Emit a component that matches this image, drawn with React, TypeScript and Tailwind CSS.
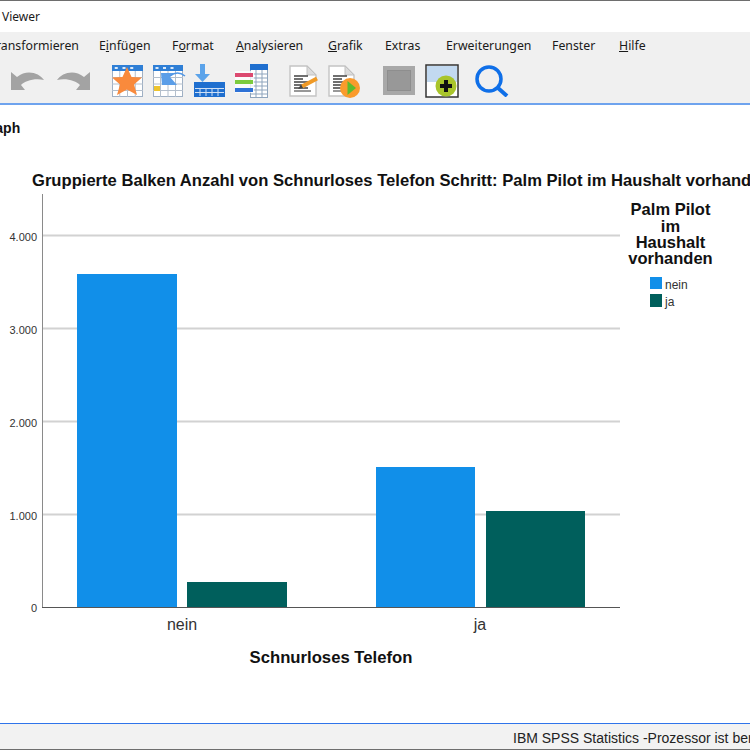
import React from 'react';

const menuItems = [
  { before: '', key: '', after: 'ransformieren', width: 'w-[82px] ml-[-4px]' },
  { before: 'E', key: 'i', after: 'nfügen', width: 'w-[52px]' },
  { before: 'F', key: 'o', after: 'rmat', width: 'w-[43px]' },
  { before: '', key: 'A', after: 'nalysieren', width: 'w-[71px]' },
  { before: '', key: 'G', after: 'rafik', width: 'w-[36px]' },
  { before: 'Extras', key: '', after: '', width: 'w-[40px]' },
  { before: 'Erweiterungen', key: '', after: '', width: 'w-[85px]' },
  { before: 'Fenster', key: '', after: '', width: 'w-[46px]' },
  { before: '', key: 'H', after: 'ilfe', width: 'w-[27px]' },
];

function TableGrid({ w, h }: { w: number; h: number }) {
  const cols = [1, 2, 3].map((i) => (w * i) / 4);
  const rows = [1, 2, 3].map((i) => 6 + ((h - 6) * i) / 4);
  return (
    <g>
      <rect x={0.5} y={0.5} width={w - 1} height={h - 1} fill="#fff" stroke="#9fb0c4" />
      <rect x={0} y={0} width={w} height={6} fill="#2f7fd6" />
      {cols.map((c) => (
        <line key={c} x1={c} x2={c} y1={6} y2={h} stroke="#b4bfcc" />
      ))}
      {rows.map((r) => (
        <line key={r} x1={0} x2={w} y1={r} y2={r} stroke="#b4bfcc" />
      ))}
      {cols.map((c) => (
        <rect key={c} x={c - 5} y={2} width={3} height={2} fill="#dbe9f8" />
      ))}
    </g>
  );
}

function UndoIcon() {
  return (
    <svg width="33" height="20" viewBox="0 0 33 20" className="block">
      <path d="M0 1 L0 19 L14 19 L10 14 C14 10 23 7 33 9 C28 2 16 -2 6 6 Z" fill="#a3a3a3" />
    </svg>
  );
}

function RedoIcon() {
  return (
    <svg width="33" height="20" viewBox="0 0 33 20" className="block">
      <path d="M33 1 L33 19 L19 19 L23 14 C19 10 10 7 0 9 C5 2 17 -2 27 6 Z" fill="#a3a3a3" />
    </svg>
  );
}

function StarTableIcon() {
  return (
    <svg width="31" height="32" viewBox="0 0 31 32" className="block">
      <TableGrid w={31} h={32} />
      <path d="M15 2 L19.5 12 L30 12.5 L22 19.5 L25 30 L15 24.5 L5 30 L8 19.5 L0 12.5 L10.5 12 Z" fill="#f98a3c" />
    </svg>
  );
}

function ArrowTableIcon() {
  return (
    <svg width="33" height="32" viewBox="0 0 33 32" className="block">
      <TableGrid w={30} h={32} />
      <rect x={1} y={21} width={6} height={5} fill="#edc42f" />
      <path d="M8 8 L21 8 L17 12 L24 20 L9 20 Z" fill="#5b9ee8" />
      <path d="M17 11 C22 7 27 7 32 11" fill="none" stroke="#4f96e6" strokeWidth="1.5" />
    </svg>
  );
}

function ImportIcon() {
  return (
    <svg width="32" height="33" viewBox="0 0 32 33" className="block">
      <rect x={0} y={18} width={31} height={15} fill="#1f6fcf" />
      {[6, 12, 18, 24].map((x) => (
        <line key={x} x1={x} x2={x} y1={24} y2={32} stroke="#cfe0f5" />
      ))}
      <rect x={1} y={24} width={29} height={1} fill="#cfe0f5" />
      <rect x={1} y={28} width={29} height={1} fill="#cfe0f5" />
      <path d="M6 0 L11 0 L11 10 L16 10 L8.5 18 L1 10 L6 10 Z" fill="#5ba3ea" />
    </svg>
  );
}

function VariableIcon() {
  return (
    <svg width="33" height="34" viewBox="0 0 33 34" className="block">
      <rect x={15.5} y={0.5} width={17} height={33} fill="#fff" stroke="#8fa5bd" />
      <rect x={15} y={0} width={18} height={6} fill="#1f6fcf" />
      {[21, 27].map((x) => (
        <line key={x} x1={x} x2={x} y1={6} y2={33} stroke="#8fa5bd" />
      ))}
      {[10, 14, 18, 22, 26, 30].map((y) => (
        <line key={y} x1={16} x2={33} y1={y} y2={y} stroke="#8fa5bd" />
      ))}
      <rect x={0} y={7} width={19} height={22} fill="#fff" opacity="0.75" />
      <rect x={0} y={9} width={18} height={4} fill="#dc4a70" />
      <rect x={0} y={16} width={18} height={4} fill="#7ccb3e" />
      <rect x={0} y={24} width={18} height={4} fill="#2f72d6" />
    </svg>
  );
}

function DocLines() {
  return (
    <g>
      {[11, 14, 17, 20, 23].map((y, i) => (
        <line key={y} x1={5} x2={i % 2 ? 14 : 19} y1={y} y2={y} stroke="#333" strokeWidth="1.4" />
      ))}
      <line x1={5} x2={22} y1={26} y2={26} stroke="#333" strokeWidth="1" />
    </g>
  );
}

function DocPenIcon() {
  return (
    <svg width="30" height="32" viewBox="0 0 30 32" className="block">
      <path d="M1 1 L18 1 L27 10 L27 31 L1 31 Z" fill="#fff" stroke="#c4c4c4" strokeWidth="1.4" />
      <path d="M18 1 L18 10 L27 10 Z" fill="#dcdcdc" stroke="#c0c0c0" />
      <DocLines />
      <path d="M13 21.5 L28 13.5" stroke="#f09a26" strokeWidth="4" />
      <path d="M9 24 L12 19.5 L14 23 Z" fill="#444" />
    </svg>
  );
}

function DocPlayIcon() {
  return (
    <svg width="33" height="33" viewBox="0 0 33 33" className="block">
      <path d="M1 1 L17 1 L26 10 L26 31 L1 31 Z" fill="#fff" stroke="#c4c4c4" strokeWidth="1.4" />
      <path d="M17 1 L17 10 L26 10 Z" fill="#dcdcdc" stroke="#c0c0c0" />
      <DocLines />
      <circle cx="22" cy="23" r="10" fill="#fa9b2c" />
      <path d="M19.5 16 L28 23 L19.5 30 Z" fill="#5dbb2e" />
    </svg>
  );
}

function GrayBoxIcon() {
  return (
    <svg width="32" height="29" viewBox="0 0 32 29" className="block">
      <rect x={0} y={0} width={32} height={29} fill="#a8a8a8" />
      <rect x={4.5} y={4.5} width={23} height={20} fill="#989898" stroke="#8e8e8e" />
    </svg>
  );
}

function BoxPlusIcon() {
  return (
    <svg width="34" height="34" viewBox="0 0 34 34" className="block">
      <rect x={1} y={1} width={32} height={32} fill="#fff" stroke="#333" strokeWidth="1.5" />
      <rect x={2} y={2} width={30} height={16} fill="#c2d9f0" />
      <circle cx="21" cy="22" r="10.5" fill="#a9c52b" />
      <path d="M19 16 h4 v4 h4 v4 h-4 v4 h-4 v-4 h-4 v-4 h4 Z" fill="#111" />
    </svg>
  );
}

function SearchIcon() {
  return (
    <svg width="34" height="32" viewBox="0 0 34 32" className="block">
      <circle cx="14" cy="14" r="12" fill="none" stroke="#0f6fe8" strokeWidth="3.5" />
      <line x1="23" y1="23" x2="32" y2="31" stroke="#0f6fe8" strokeWidth="4" />
    </svg>
  );
}

function Chart() {
  const grid = [
    { y: 235.5, label: '4.000' },
    { y: 328.5, label: '3.000' },
    { y: 421.5, label: '2.000' },
    { y: 514.5, label: '1.000' },
  ];
  const bars = [
    { x: 77, w: 100, top: 274, fill: '#118fe9' },
    { x: 187, w: 100, top: 582, fill: '#005f5c' },
    { x: 376, w: 99, top: 467, fill: '#118fe9' },
    { x: 486, w: 99, top: 511, fill: '#005f5c' },
  ];
  const legendTitle = ['Palm Pilot', 'im', 'Haushalt', 'vorhanden'];
  return (
    <svg width="750" height="560" viewBox="0 160 750 560" className="block" fontFamily="'Liberation Sans', Arial, sans-serif">
      <text x="32" y="186" fontSize="16.6" fontWeight="700" fill="#111">
        Gruppierte Balken Anzahl von Schnurloses Telefon Schritt: Palm Pilot im Haushalt vorhanden
      </text>
      {grid.map((g) => (
        <g key={g.label}>
          <line x1="43" x2="620" y1={g.y} y2={g.y} stroke="#d2d2d2" strokeWidth="2" />
          <text x="37" y={g.y + 5} textAnchor="end" fontSize="11" fill="#333">
            {g.label}
          </text>
        </g>
      ))}
      {bars.map((b) => (
        <rect key={b.x} x={b.x} y={b.top} width={b.w} height={607 - b.top} fill={b.fill} />
      ))}
      <line x1="42.5" x2="42.5" y1="194" y2="608" stroke="#8a8a8a" />
      <line x1="42" x2="620" y1="607.5" y2="607.5" stroke="#555" />
      <text x="37" y="612" textAnchor="end" fontSize="11" fill="#333">
        0
      </text>
      <text x="182" y="630" textAnchor="middle" fontSize="16" fill="#333">
        nein
      </text>
      <text x="480" y="630" textAnchor="middle" fontSize="16" fill="#333">
        ja
      </text>
      <text x="331" y="663" textAnchor="middle" fontSize="16.7" fontWeight="700" fill="#111">
        Schnurloses Telefon
      </text>
      {legendTitle.map((t, i) => (
        <text key={t} x="670.5" y={215.2 + i * 16.3} textAnchor="middle" fontSize="16.5" fontWeight="700" fill="#111">
          {t}
        </text>
      ))}
      <rect x="650" y="277" width="12" height="12" fill="#118fe9" />
      <rect x="650" y="294" width="12" height="13" fill="#005f5c" />
      <text x="665" y="289" fontSize="12" fill="#333">
        nein
      </text>
      <text x="665" y="306" fontSize="12" fill="#333">
        ja
      </text>
    </svg>
  );
}

export default function App() {
  return (
    <div className="flex h-[750px] w-[750px] flex-col overflow-hidden bg-white font-['Noto_Sans',sans-serif] text-[#1a1a1a]">
      {/* Title bar */}
      <div className="h-px bg-[#6e6e6e]" />
      <div className="flex h-[31px] items-center pl-[2px] text-xs">Viewer</div>

      {/* Menu */}
      <div className="flex h-[28px] items-center gap-[21px] bg-[#f0f0f0] text-[12.3px]">
        {menuItems.map((m, i) => (
          <span key={i} className={`${m.width} shrink-0 whitespace-nowrap`}>
            {m.before}
            {m.key && <u>{m.key}</u>}
            {m.after}
          </span>
        ))}
      </div>

      {/* Toolbar */}
      <div className="flex h-[45px] items-start border-b-2 border-[#6ea3ee] bg-[#f0f0f0] pl-[11px]">
        <div className="mt-[11px]">
          <UndoIcon />
        </div>
        <div className="ml-[13px] mt-[11px]">
          <RedoIcon />
        </div>
        <div className="ml-[22px] mt-[5px]">
          <StarTableIcon />
        </div>
        <div className="ml-[10px] mt-[5px]">
          <ArrowTableIcon />
        </div>
        <div className="ml-[8px] mt-[4px]">
          <ImportIcon />
        </div>
        <div className="ml-[9px] mt-[4px]">
          <VariableIcon />
        </div>
        <div className="ml-[21px] mt-[5px]">
          <DocPenIcon />
        </div>
        <div className="ml-[9px] mt-[5px]">
          <DocPlayIcon />
        </div>
        <div className="ml-[22px] mt-[6px]">
          <GrayBoxIcon />
        </div>
        <div className="ml-[10px] mt-[4px]">
          <BoxPlusIcon />
        </div>
        <div className="ml-[16px] mt-[5px]">
          <SearchIcon />
        </div>
      </div>

      {/* Output pane */}
      <div className="flex min-h-0 flex-1 flex-col">
        <div className="ml-[-21px] mt-[14px] h-[41px] font-['Liberation_Sans',sans-serif] text-sm font-bold leading-[18px] text-[#111]">
          Graph
        </div>
        <Chart />
      </div>

      {/* Status bar */}
      <div className="h-px bg-[#2f74ea]" />
      <div className="flex h-[25px] items-center whitespace-nowrap bg-[#f2f2f2] pl-[513px] pt-[3px] font-['Liberation_Sans',sans-serif] text-sm text-[#222]">
        IBM SPSS Statistics -Prozessor ist bereit
      </div>
      <div className="h-px bg-[#6e6e6e]" />
    </div>
  );
}
